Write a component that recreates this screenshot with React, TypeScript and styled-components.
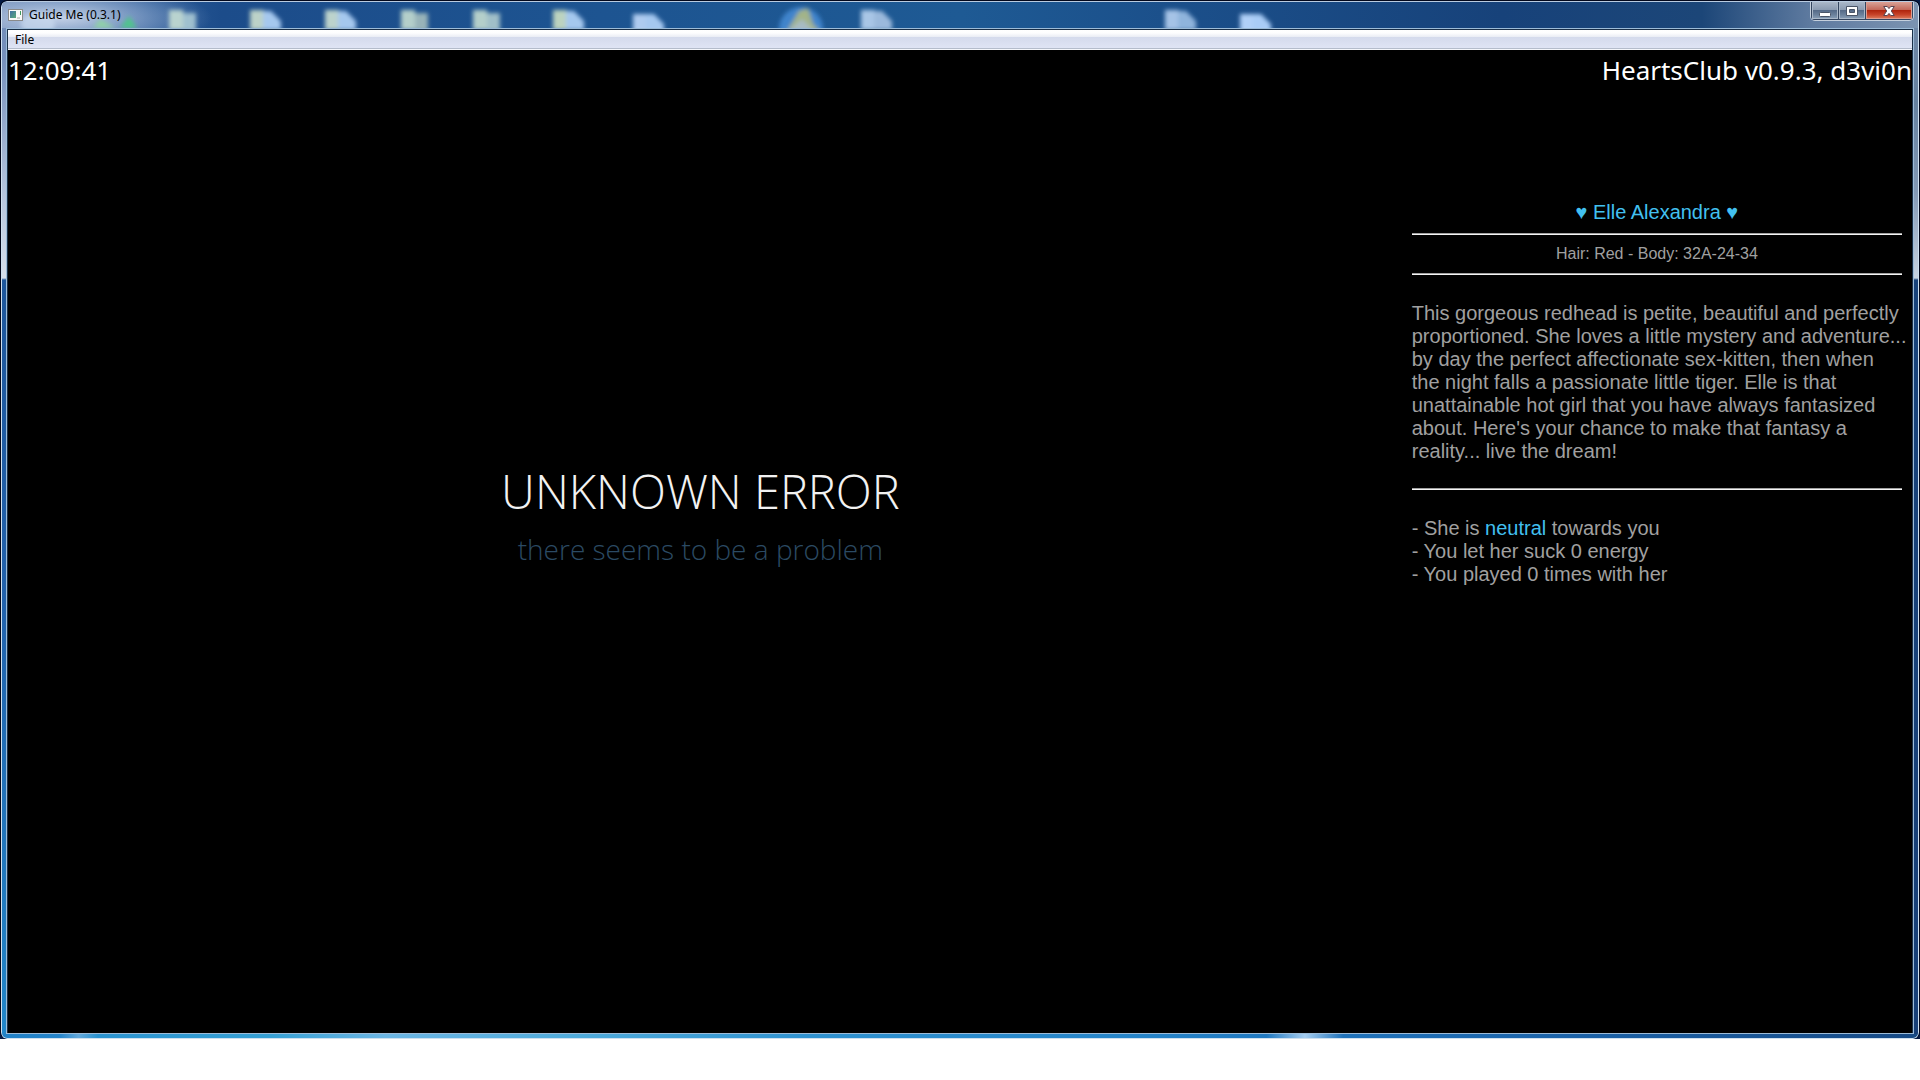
import React from 'react';
import styled, { createGlobalStyle } from 'styled-components';

const GlobalStyle = createGlobalStyle`
  *, *::before, *::after { box-sizing: border-box; }
  body {
    margin: 0;
    background: #fff;
    font-family: "Noto Sans", "Open Sans", sans-serif;
  }
`;

const Desktop = styled.div`
  height: calc(100vh - 41px);
  min-height: 700px;
  background: #051a44;
`;

const Window = styled.div`
  height: 100%;
  display: flex;
  flex-direction: column;
  overflow: hidden;
  border: solid #03081c;
  border-width: 1px 1px 0;
  border-radius: 7px;
`;

const Frame = styled.div`
  flex: 1;
  min-height: 0;
  display: flex;
  flex-direction: column;
  overflow: hidden;
  padding: 0 4px 4px;
  border: 1px solid #cfe0ef;
  border-top-color: #b9cbe0;
  border-radius: 6px;
  background:
    linear-gradient(90deg, #2080c6 0, #2484ca 3%, #63a9dc 4%, #2a93d0 5%, #36a0d4 14%, #6cb6e4 20%, #4fabdb 30%, #2f92d0 42%, #2583c8 60%, #1f78c0 66%, #a5cdf0 68%, #1f72ba 70%, #1b62a8 82%, #174a85 100%) left bottom / 100% 4px no-repeat,
    linear-gradient(180deg, #6f8bb6 0, #7791bd 60px, #b9c8df 200px, #d6dfeb 276px, #1d569b 278px, #2262ac 600px, #2186c9 100%) left top / 5px 100% no-repeat,
    linear-gradient(180deg, #7289a8 0, #64809f 100px, #8298b5 190px, #c6d2e0 276px, #17427a 278px, #173f77 100%) right top / 5px 100% no-repeat,
    #1c528f;
`;

const TitleBar = styled.header`
  position: relative;
  height: 26px;
  flex: none;
  display: flex;
  justify-content: space-between;
  align-items: flex-start;
  margin: 0 -4px;
  padding-left: 6px;
  overflow: hidden;
  background:
    radial-gradient(ellipse 150px 34px at 60px 16px, rgba(214, 224, 240, .85), rgba(170, 190, 220, .55) 50%, transparent 100%),
    linear-gradient(90deg, #6f8bb6 0, #4f76ab 60px, #2a5a97 150px, #1c4c8a 220px, #1d5491 600px, #1e5a94 960px, #1b4f8a 1180px, #17427a 1500px, #1c4678 1700px, #5f7ba0 1810px, #7b93b1 100%);
`;

const Backdrop = styled.svg`
  position: absolute;
  inset: 0;
  width: 100%;
  height: 100%;
`;

const Caption = styled.div`
  position: relative;
  display: flex;
  align-items: center;
  gap: 6px;
  height: 25px;
  font-size: 12px;
  line-height: 16px;
  color: #000;
`;

const WindowButtons = styled.div`
  position: relative;
  display: flex;
  height: 19px;
  margin-right: 4px;
  border: solid #c5d0dd;
  border-width: 0 1px 1px;
  border-radius: 0 0 5px 5px;
  overflow: hidden;
`;

const WindowButton = styled.button<{ $close?: boolean }>`
  width: ${p => (p.$close ? 47 : 27)}px;
  padding: 0;
  display: flex;
  align-items: center;
  justify-content: center;
  border: 1px solid #34455f;
  border-top: 0;
  box-shadow: inset 0 0 0 1px ${p => (p.$close ? '#dd9c90' : '#a9b7c8')};
  background: ${p => (p.$close
    ? 'linear-gradient(#d9a398 0, #c4695a 45%, #b0260f 50%, #c8442a 75%, #dc8060 100%)'
    : 'linear-gradient(#aab7c8 0, #8b9bb1 45%, #566b88 50%, #6b819c 75%, #8aa0b8 100%)')};
  &:first-child { width: 28px; }
  & + & { border-left: 0; }
`;

const Client = styled.div`
  flex: 1;
  min-height: 0;
  display: flex;
  flex-direction: column;
  border: 1px solid #9dbcd8;
  background: #000;
`;

const ClientEdge = styled.div`
  flex: 1;
  min-height: 0;
  display: flex;
  flex-direction: column;
  border: solid #1a2f47;
  border-width: 1px 1px 0;
`;

const MenuBar = styled.nav`
  height: 20px;
  flex: none;
  display: flex;
  border-bottom: 1px solid #f4f6fb;
  box-shadow: inset 0 -1px #b4bccb;
  background: linear-gradient(#fff 0, #fdfdfe 3px, #e9ecf4 7px, #d4daec 7px, #e0e5f5 100%);
`;

const MenuItem = styled.button`
  padding: 0 7px;
  border: 0;
  background: none;
  font-family: inherit;
  font-size: 12px;
  line-height: 18px;
  color: #000;
`;

const StatusRow = styled.div`
  flex: none;
  display: flex;
  justify-content: space-between;
  color: #fff;
  font-size: 26px;
  line-height: 40px;
`;

const Panes = styled.main`
  flex: 1;
  min-height: 0;
  display: grid;
  grid-template-columns: minmax(0, 8fr) minmax(0, 3fr);
`;

const MediaPane = styled.section`
  display: flex;
  flex-direction: column;
  align-items: center;
  justify-content: center;
  padding-bottom: 90px;
  font-family: "Open Sans", sans-serif;
  font-weight: 300;
`;

const ErrorTitle = styled.h1`
  margin: 0;
  font-size: 47px;
  line-height: 64px;
  font-weight: 300;
  color: #f2f2f2;
`;

const ErrorText = styled.p`
  margin: 0;
  font-size: 28px;
  line-height: 52px;
  color: #2b4a63;
`;

const InfoPane = styled.aside`
  padding: 111px 10px 0 19px;
  font-family: "Liberation Sans", Arial, sans-serif;
  font-size: 20px;
  line-height: 23px;
  color: #a0a0a0;
`;

const Name = styled.h2`
  margin: 0;
  font-size: 20px;
  line-height: 23px;
  font-weight: 400;
  text-align: center;
  color: #42c0f0;
`;

const Rule = styled.hr<{ $gap: number }>`
  height: 2px;
  margin: ${p => p.$gap}px 0;
  border: 0;
  border-top: 1px solid #a0a0a0;
  background: #f4f4f4;
`;

const Stats = styled.p`
  margin: 0;
  font-size: 16px;
  line-height: 20px;
  text-align: center;
`;

const Bio = styled.p`
  margin: 27px 0 25px;
  white-space: nowrap;
`;

const Facts = styled.ul`
  margin: 27px 0 0;
  padding: 0;
  list-style: none;
`;

const Mood = styled.span`
  color: #42c0f0;
`;

const documents = [
  { x: 167, left: '#b9d3cf', right: '#9fc0cf', square: true },
  { x: 248, left: '#bcd2c8', right: '#a5c8ee' },
  { x: 323, left: '#bcd3cc', right: '#a5c8ee' },
  { x: 399, left: '#b4cfca', right: '#98b3b9', square: true },
  { x: 471, left: '#b4cfca', right: '#a0bfc8', square: true },
  { x: 551, left: '#bcd3bf', right: '#a5c8ee' },
  { x: 631, left: '#aecbf0', right: '#a5c8f0', low: true },
  { x: 859, left: '#a9c6e6', right: '#9bb9dc' },
  { x: 1163, left: '#a5c3e6', right: '#8fb4dc' },
  { x: 1238, left: '#b0d0f8', right: '#a9ccf6', low: true },
];

function DesktopIcons() {
  return (
    <Backdrop aria-hidden="true">
      <defs>
        <filter id="glass" x="-30%" y="-30%" width="160%" height="160%">
          <feGaussianBlur stdDeviation="2" />
        </filter>
      </defs>
      <g filter="url(#glass)">
        <ellipse cx="36" cy="22" rx="17" ry="11" fill="#cbdcef" opacity=".7" />
        <path d="M91 26 L98 17 L114 26Z" fill="#8fd0a8" />
        <path d="M118 26 L127 14 L135 26Z" fill="#4fc48c" />
        {documents.map(d => (
          <g key={d.x}>
            <path d={`M${d.x} ${d.low ? 12 : 8}h14v20h-14z`} fill={d.left} />
            <path
              d={d.square
                ? `M${d.x + 14} 11h13v18h-13z`
                : `M${d.x + 13} ${d.low ? 12 : 9}h8l10 10v9h-18z`}
              fill={d.right}
            />
          </g>
        ))}
        <circle cx="799" cy="27" r="22" fill="#3f84cc" />
        <path d="M785 29 L797 9 L806 6 L811 22 L818 29Z" fill="#a3b488" />
        <path d="M786 29 L800 17 L812 29Z" fill="#a8bcc4" />
      </g>
    </Backdrop>
  );
}

export default function App() {
  return (
    <>
      <GlobalStyle />
      <Desktop>
        <Window>
          <Frame>
            <TitleBar>
              <DesktopIcons />
              <Caption>
                <svg width="15" height="12" viewBox="0 0 15 12" aria-hidden="true">
                  <defs>
                    <linearGradient id="screen" x1="0" y1="0" x2="1" y2="1">
                      <stop offset="0" stopColor="#3f6fa4" />
                      <stop offset="1" stopColor="#58a878" />
                    </linearGradient>
                  </defs>
                  <rect x=".5" y=".5" width="14" height="11" fill="#f8f8f8" stroke="#8a8a8a" />
                  <rect x="2" y="2" width="6" height="7" fill="url(#screen)" />
                  <rect x="9" y="8" width="3" height="2" fill="#cfcfcf" />
                  <rect x="12" y="2" width="1" height="4" fill="#3f9a60" />
                </svg>
                <span>Guide Me (0.3.1)</span>
              </Caption>
              <WindowButtons>
                <WindowButton type="button" aria-label="Minimize">
                  <svg width="12" height="12" viewBox="0 0 12 12">
                    <rect x=".5" y="7.5" width="11" height="4" rx="1" fill="#fff" stroke="#4a5568" />
                  </svg>
                </WindowButton>
                <WindowButton type="button" aria-label="Maximize">
                  <svg width="12" height="10" viewBox="0 0 12 10">
                    <path fillRule="evenodd" d="M.5.5h11v9H.5zM3.5 3.5v3h5v-3z" fill="#fff" stroke="#4a5568" />
                  </svg>
                </WindowButton>
                <WindowButton type="button" aria-label="Close" $close>
                  <svg width="12" height="10" viewBox="0 0 12 10">
                    <path d="M.7.5h3.6L6 2.6 7.7.5h3.6L8.3 5l3 4.5H7.7L6 7.4 4.3 9.5H.7L3.7 5z" fill="#fff" stroke="#5a4450" />
                  </svg>
                </WindowButton>
              </WindowButtons>
            </TitleBar>
            <Client>
              <ClientEdge>
                <MenuBar>
                  <MenuItem type="button">File</MenuItem>
                </MenuBar>
                <StatusRow>
                  <span>12:09:41</span>
                  <span>HeartsClub v0.9.3, d3vi0n</span>
                </StatusRow>
                <Panes>
                  <MediaPane>
                    <ErrorTitle>UNKNOWN ERROR</ErrorTitle>
                    <ErrorText>there seems to be a problem</ErrorText>
                  </MediaPane>
                  <InfoPane>
                    <Name>♥ Elle Alexandra ♥</Name>
                    <Rule $gap={9} />
                    <Stats>Hair: Red - Body: 32A-24-34</Stats>
                    <Rule $gap={9} />
                    <Bio>
                      This gorgeous redhead is petite, beautiful and perfectly<br />
                      proportioned. She loves a little mystery and adventure...<br />
                      by day the perfect affectionate sex-kitten, then when<br />
                      the night falls a passionate little tiger. Elle is that<br />
                      unattainable hot girl that you have always fantasized<br />
                      about. Here's your chance to make that fantasy a<br />
                      reality... live the dream!
                    </Bio>
                    <Rule $gap={0} />
                    <Facts>
                      <li>- She is <Mood>neutral</Mood> towards you</li>
                      <li>- You let her suck 0 energy</li>
                      <li>- You played 0 times with her</li>
                    </Facts>
                  </InfoPane>
                </Panes>
              </ClientEdge>
            </Client>
          </Frame>
        </Window>
      </Desktop>
    </>
  );
}
